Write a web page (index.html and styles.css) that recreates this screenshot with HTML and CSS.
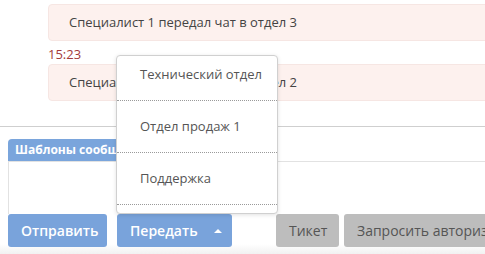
FILE: index.html
```html
<!DOCTYPE html>
<html lang="ru">
<head>
    <meta charset="UTF-8">
    <meta name="viewport" content="width=device-width, initial-scale=1.0">
    <title>Чат</title>
    <link rel="stylesheet" href="styles.css">
</head>
<body>
    <div class="page">
        <div class="messages">
            <div class="bubble">Специалист 1 передал чат в отдел 3</div>
            <div class="time">15:23</div>
            <div class="bubble">Специалист 1 передал чат в отдел 2</div>
        </div>

        <div class="composer">
            <div class="templates">Шаблоны сообщений</div>
            <div class="textarea"></div>
            <div class="actions">
                <button class="btn blue send">Отправить</button>
                <button class="btn blue transfer">Передать <span class="caret"></span></button>
                <button class="btn grey ticket">Тикет</button>
                <button class="btn grey auth">Запросить авторизацию</button>
            </div>
        </div>

        <div class="dropdown">
            <ul class="dept-list">
                <li>Технический отдел</li>
                <li>Отдел продаж 1</li>
                <li>Поддержка</li>
                <li>Отдел продаж 2</li>
            </ul>
        </div>
    </div>
</body>
</html>
```

FILE: styles.css
```css
body {
    margin: 0;
    font-family: "Open Sans", Arial, sans-serif;
    background: #fff;
    overflow: hidden;
}
.page {
    position: relative;
    width: 485px;
    height: 254px;
    overflow: hidden;
    background: linear-gradient(to bottom, #fff 0, #fff 244px, #f1f1f1 254px);
}
.messages {
    padding: 4px 0 0 48px;
    height: 122px;
    border-bottom: 1px solid #cfcfcf;
}
.bubble {
    width: 460px;
    height: 35px;
    line-height: 35px;
    padding: 0 20px;
    background-color: #fdf1ee;
    border: 1px solid #f6e6e3;
    border-radius: 4px;
    font-size: 13px;
    color: #444;
    white-space: nowrap;
}
.time {
    font-size: 13px;
    line-height: 16px;
    color: #a33a3a;
    margin: 5px 0 2px;
}
.composer {
    padding: 10px 0 0 8px;
}
.templates {
    display: inline-block;
    height: 22px;
    line-height: 21px;
    padding: 0 7px;
    background-color: #7aa5dc;
    color: #fff;
    font-size: 12px;
    font-weight: bold;
    border-radius: 4px 4px 0 0;
}
.textarea {
    height: 52px;
    border: 1px solid #e2e2e2;
    border-right: none;
    border-bottom: none;
}
.actions {
    display: flex;
    height: 33px;
}
.btn {
    flex-shrink: 0;
    box-sizing: border-box;
    font-family: inherit;
    border: none;
    border-radius: 3px;
    font-size: 14px;
    font-weight: 600;
    height: 33px;
    padding: 0 13px;
    white-space: nowrap;
    cursor: pointer;
}
.btn.blue {
    background-color: #79a3db;
    color: #fff;
}
.btn.grey {
    background-color: #bdbdbd;
    color: #555;
    font-weight: normal;
}
.send {
    width: 99px;
}
.transfer {
    width: 115px;
    margin-left: 10px;
    text-align: left;
    padding-left: 13px;
    position: relative;
}
.caret {
    position: absolute;
    right: 10px;
    top: 15px;
    border-left: 4px solid transparent;
    border-right: 4px solid transparent;
    border-bottom: 4px solid #fff;
}
.ticket {
    width: 63px;
    margin-left: 44px;
}
.auth {
    margin-left: 5px;
}
.dropdown {
    position: absolute;
    left: 116px;
    top: 55px;
    width: 160px;
    height: 157px;
    background: #fff;
    border: 1px solid #d0d0d0;
    border-radius: 4px;
    box-shadow: 0 1px 4px rgba(0,0,0,0.12);
    overflow: hidden;
}
.dept-list {
    list-style: none;
    margin: -7px 0 0;
    padding: 0;
}
.dept-list li {
    height: 51px;
    line-height: 50px;
    padding-left: 23px;
    font-size: 13px;
    color: #555;
    border-bottom: 1px dotted #9a9a9a;
    white-space: nowrap;
}
```
